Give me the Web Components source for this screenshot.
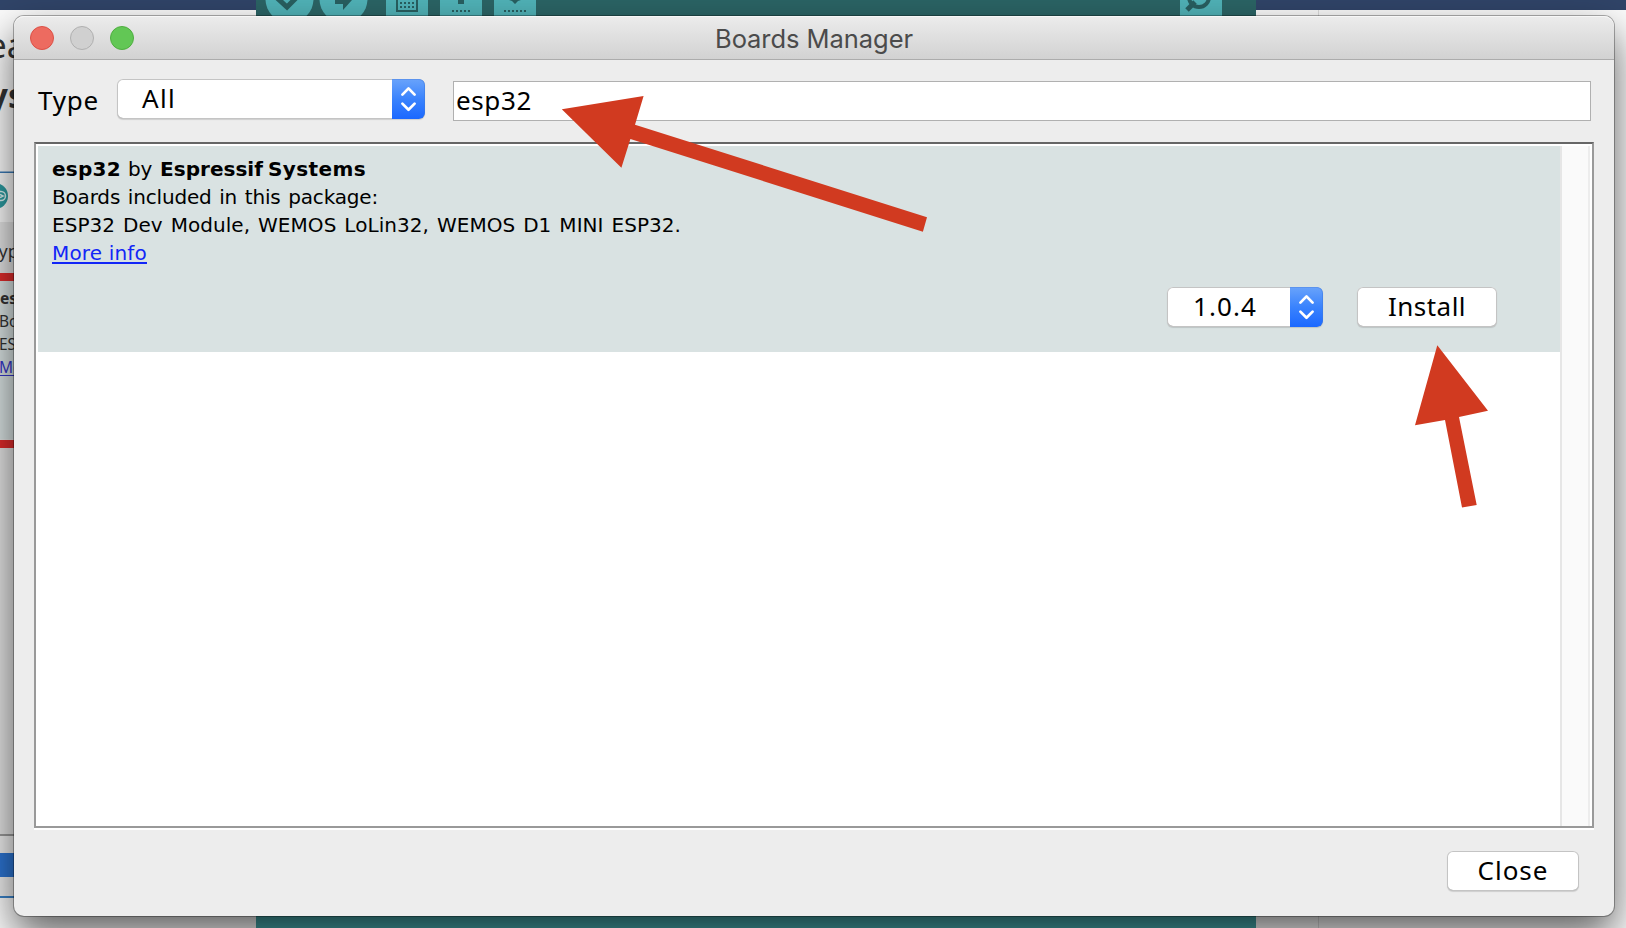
<!DOCTYPE html>
<html lang="en"><head><meta charset="utf-8"><title>Boards Manager</title>
<style>html,body{margin:0;height:100%;overflow:hidden}body{font-family:"Noto Sans","Open Sans",sans-serif;color:#000}</style></head>
<body><desk-scene></desk-scene>
<script>
const define=(name,html,setup)=>{
  const t=document.createElement('template');t.innerHTML=html;
  customElements.define(name,class extends HTMLElement{
    constructor(){super();this.attachShadow({mode:'open'}).append(t.content.cloneNode(true));}
    connectedCallback(){if(setup)setup(this,this.shadowRoot);}
  });
};

/* One line of text, tracked so that it fills the width given in "w". */
define('fit-text',`<style>:host{display:block;white-space:pre}span{display:inline-block;text-decoration:inherit;text-underline-offset:inherit}</style><span><slot></slot></span>`,(el,r)=>{
  const s=r.querySelector('span'),w=+el.getAttribute('w'),n=el.textContent.length;
  requestAnimationFrame(()=>{s.style.letterSpacing='0';
    const now=s.getBoundingClientRect().width;
    s.style.letterSpacing=((w-now)/n)+'px';});
});

define('step-knob',`<style>:host{display:flex;width:33px;height:100%;border-radius:0 6px 6px 0;background:linear-gradient(#69a3fb,#3a83fd 50%,#1b68ff);box-shadow:inset 0 1px #5b93ee,inset -1px 0 #3c7ae088;align-items:center;justify-content:center}svg{display:block}</style>
<svg width="33" height="40" fill="none" stroke="#fff" stroke-width="2.7" stroke-linecap="round" stroke-linejoin="round"><path d="M10.4 15.6 16.5 9.4 22.6 15.6M10.4 24.6 16.5 30.8 22.6 24.6"/></svg>`);

define('mac-select',`<style>:host{display:flex;box-sizing:border-box;height:40px;border-radius:6px;background:#fff;box-shadow:inset 0 0 0 1px #c4c4c4,inset 0 -1px #aaa,0 1px 1px #0002;overflow:hidden}
.v{flex:1;padding-left:var(--pad,26px);font-size:26px;line-height:38px}</style><div class="v"><slot></slot></div><step-knob></step-knob>`);

define('mac-button',`<style>:host{display:flex;box-sizing:border-box;height:40px;border-radius:6px;background:#fff;box-shadow:inset 0 0 0 1px #c4c4c4,inset 0 -1px #aaa,0 1px 1px #0002;justify-content:center;font-size:26px;line-height:38px}</style><slot></slot>`);

define('title-bar',`<style>:host{display:grid;grid-template-columns:1fr auto 1fr;align-items:center;height:44px;box-sizing:border-box;background:linear-gradient(#ececec,#d2d2d2);border-bottom:1px solid #acacac;box-shadow:inset 0 1px #f7f7f7;border-radius:10px 10px 0 0}
.d{display:flex;gap:16px;padding-left:16px}i{width:24px;height:24px;border-radius:50%;box-sizing:border-box;background:#ed6b60;border:1px solid #dc5046}i:nth-child(2){background:#d0d0d0;border-color:#b0b0b0}i:nth-child(3){background:#62c755;border-color:#4fae40}
.t{font:25.5px Inter,sans-serif;color:#4b4b4b;padding-top:2px}</style><div class="d"><i></i><i></i><i></i></div><div class="t"><slot></slot></div><div></div>`);

define('board-entry',`<style>:host{display:flex;flex-direction:column;justify-content:space-between;box-sizing:border-box;height:206px;background:#d9e2e2;padding:9px 63px 25px 14px;font:20px/28px "DejaVu Sans",Verdana,sans-serif}
.h{display:flex}.h fit-text{flex:none}.h .b{font-weight:bold}
.p{word-spacing:1.5px}.a{display:flex;justify-content:flex-end;gap:34px;font-family:"Noto Sans",sans-serif}
a{display:block;color:#1226f7;width:96px}a fit-text{text-decoration:underline 2px;text-underline-offset:2px}
.a mac-select{width:156px}.a mac-button{width:140px}</style>
<div><div class="h"><fit-text class="b" w="69" style="margin-right:7px">esp32</fit-text><fit-text w="24" style="margin-right:8px">by</fit-text><fit-text class="b" w="103" style="margin-right:5px">Espressif</fit-text><fit-text class="b" w="98">Systems</fit-text></div>
<fit-text class="p" w="326">Boards included in this package:</fit-text>
<fit-text class="p" w="629">ESP32 Dev Module, WEMOS LoLin32, WEMOS D1 MINI ESP32.</fit-text>
<a><fit-text w="95">More info</fit-text></a></div>
<div class="a"><mac-select><fit-text w="64">1.0.4</fit-text></mac-select><mac-button><fit-text w="78">Install</fit-text></mac-button></div>`);

define('board-list',`<style>:host{display:flex;box-sizing:border-box;width:1560px;height:686px;border:2px solid #999;border-top-color:#666;background:#fff;box-shadow:0 2px #fff;padding:2px 2px 0 2px}
.c{flex:1}.s{width:30px;box-sizing:border-box;background:#fafafa;border-left:2px solid #e6e6e6;border-right:2px solid #ededed}</style><div class="c"><slot></slot></div><div class="s"></div>`);

define('boards-window',`<style>:host{display:flex;flex-direction:column;width:1600px;height:900px;border-radius:10px;background:#ededed;box-shadow:0 0 0 1px #0000004d,0 18px 40px #000000a0}
.f{display:flex;align-items:flex-start;padding:19px 23px 0 24px;height:82px;box-sizing:border-box;font-size:26px}
.f>fit-text{line-height:35px;padding-top:4px;width:79px}.f mac-select{width:308px;--pad:25px}
.q{box-sizing:border-box;margin:2px 0 0 28px;flex:1;height:40px;background:#fff;border:1px solid #b0b0b0;padding-left:2px;line-height:36px}
board-list{margin-left:20px}.b{display:flex;justify-content:flex-end;padding:23px 35px 0}.b mac-button{width:132px}</style>
<title-bar><fit-text w="198">Boards Manager</fit-text></title-bar>
<div class="f"><fit-text w="61">Type</fit-text><mac-select><fit-text w="34">All</fit-text></mac-select><div class="q"><fit-text w="76">esp32</fit-text></div></div>
<board-list><board-entry></board-entry></board-list>
<div class="b"><mac-button><fit-text w="71">Close</fit-text></mac-button></div>`);

/* Strip of the browser page and the editor window that lie behind the dialog. */
define('back-drop',`<style>:host{display:block;width:1626px;height:928px;background:#fff}svg{display:block}text{fill:#333;font-family:"Noto Sans",sans-serif}</style>
<svg width="1626" height="928"><defs><pattern id="p" width="4" height="4" patternUnits="userSpaceOnUse"><path fill="#285f60" d="M0 2h2v2H0z"/></pattern></defs>
<path fill="#fbfbfb" d="M0 0h1626v928H0z"/><path fill="#304468" d="M0 0h1626v10H0z"/><path stroke="#ddd" d="M1318.500 10v918"/>
<text x="-12.500" y="58" font-size="34">ea</text><text x="-11.500" y="108" font-size="34" font-weight="bold">ys</text>
<path fill="#3a79b5" d="M0 171.500h14v1.500H0z"/><path fill="#f8f8f8" d="M0 173h14v49H0z"/><circle cx="-5" cy="196" r="13" fill="#2c9a9f"/><path d="M-6 191.500H1a4.500 4.500 0 0 1 0 9h-7M0 194.500l3 1.500-3 1.500" fill="none" stroke="#d8eeee" stroke-width="1.500"/>
<path fill="#e4e4e4" d="M0 222h14v612H0z"/><text x="-1.500" y="258" font-size="18">yp</text>
<path fill="#d9e2e2" d="M0 281h14v158H0z"/><path fill="#df2c2c" d="M0 273h14v8H0zM0 440h14v8H0z"/>
<g font-size="15.500" style="font-family:'DejaVu Sans'"><text x="0" y="304" font-weight="bold">es</text><text x="-1" y="327">Bo</text><text x="-1" y="350">ES</text><text x="-1" y="373" style="fill:#3636c8">Mo</text></g><path stroke="#3636c8" d="M0 375.500h14"/>
<path fill="#999" d="M0 834h14v2H0z"/><path fill="#eee" d="M0 836h14v61H0z"/><path fill="#2c74d2" d="M0 853h14v24H0z"/><path fill="#3a82c8" d="M0 896h14v2H0z"/>
<path fill="#2b6465" d="M256 0h1000v20H256z"/><path fill="#43a3a6" d="M256 900h1000v28H256z"/>
<g fill="#50b2b7"><circle cx="289.500" cy="-1" r="24"/><circle cx="343.500" cy="-1" r="24"/><path d="M386 0h42v16h-42zM440 0h42v16h-42zM494 0h42v16h-42zM1180 0h42v16h-42z"/></g>
<g fill="none" stroke="#285f60"><path stroke-width="5" d="M276-3 287 7 298-4"/><path stroke-width="2" d="M397 0v11h20V0"/><path stroke-width="5" d="M1195 2l-8 8"/><circle cx="1199" cy="-3" r="10" stroke-width="4"/></g>
<g fill="#285f60"><path d="M335 0h8v4h-8zM343 0h9l-9 10zM458 0h6v4h-6zM509 0h12l-3 1-3 3-3-3z"/></g>
<g fill="url(#p)"><path d="M400 0h15v8h-15zM450 8h22v4h-22zM504 8h22v4h-22z"/></g></svg>`);

define('pointer-arrows',`<style>:host{display:block}svg{display:block}</style><svg width="1626" height="928" fill="#d13a20"><path d="M561.800 109.300 643.600 96 635 124.700 927 217.300 922.900 231.700 630.400 139 621.400 167.700ZM1437.300 345.300 1488 410.700 1459 417 1476.700 505 1462 507.500 1445 420 1415 425.300Z"/></svg>`);

define('desk-scene',`<style>:host{display:grid;width:1626px;height:928px;overflow:hidden}:host>*{grid-area:1/1}boards-window{margin:16px 0 0 14px}pointer-arrows{z-index:2}</style>
<back-drop></back-drop><boards-window></boards-window><pointer-arrows></pointer-arrows>`);
</script></body></html>
